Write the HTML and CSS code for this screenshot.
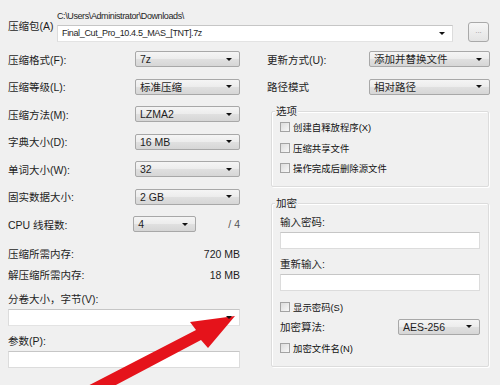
FILE: index.html
```html
<!DOCTYPE html>
<html lang="zh-CN">
<head>
    <meta charset="UTF-8">
    <title>添加到压缩包</title>
    <link rel="stylesheet" href="styles.css">
</head>
<body>
    <div class="dialog">
        <!-- Archive path -->
        <div class="archive">
            <div class="archive-label">压缩包(A)</div>
            <div class="archive-field">
                <div class="path">C:\Users\Administrator\Downloads\</div>
                <div class="combo edit"><span class="value latin">Final_Cut_Pro_10.4.5_MAS_[TNT].7z</span><span class="drop"></span></div>
            </div>
            <div class="browse">...</div>
        </div>

        <div class="columns">
            <!-- Left column -->
            <div class="left">
                <div class="row"><span class="label">压缩格式(F):</span><div class="combo"><span class="value">7z</span><span class="drop"></span></div></div>
                <div class="row"><span class="label">压缩等级(L):</span><div class="combo"><span class="value">标准压缩</span><span class="drop"></span></div></div>
                <div class="row"><span class="label">压缩方法(M):</span><div class="combo"><span class="value">LZMA2</span><span class="drop"></span></div></div>
                <div class="row"><span class="label">字典大小(D):</span><div class="combo"><span class="value">16 MB</span><span class="drop"></span></div></div>
                <div class="row"><span class="label">单词大小(W):</span><div class="combo"><span class="value">32</span><span class="drop"></span></div></div>
                <div class="row"><span class="label">固实数据大小:</span><div class="combo"><span class="value">2 GB</span><span class="drop"></span></div></div>
                <div class="row threads"><span class="label">CPU 线程数:</span><div class="combo short"><span class="value">4</span><span class="drop"></span></div><span class="total">/ 4</span></div>

                <div class="mem first"><span>压缩所需内存:</span><span>720 MB</span></div>
                <div class="mem"><span>解压缩所需内存:</span><span>18 MB</span></div>

                <div class="field-label volume">分卷大小，字节(V):</div>
                <div class="combo edit"><span class="value"></span><span class="drop"></span></div>
                <div class="field-label">参数(P):</div>
                <div class="textbox"></div>
            </div>

            <!-- Right column -->
            <div class="right">
                <div class="row"><span class="label">更新方式(U):</span><div class="combo wide"><span class="value">添加并替换文件</span><span class="drop"></span></div></div>
                <div class="row"><span class="label">路径模式</span><div class="combo wide"><span class="value">相对路径</span><span class="drop"></span></div></div>

                <div class="group options">
                    <div class="group-title">选项</div>
                    <div class="check"><span class="box"></span>创建自释放程序(X)</div>
                    <div class="check"><span class="box"></span>压缩共享文件</div>
                    <div class="check"><span class="box"></span>操作完成后删除源文件</div>
                </div>

                <div class="group encrypt">
                    <div class="group-title">加密</div>
                    <div class="field-label first">输入密码:</div>
                    <div class="textbox"></div>
                    <div class="field-label">重新输入:</div>
                    <div class="textbox"></div>
                    <div class="check show"><span class="box"></span>显示密码(S)</div>
                    <div class="row method"><span class="label">加密算法:</span><div class="combo aes"><span class="value">AES-256</span><span class="drop"></span></div></div>
                    <div class="check"><span class="box"></span>加密文件名(N)</div>
                </div>
            </div>
        </div>

        <!-- Red pointer drawn over the dialog -->
        <svg class="pointer" width="500" height="385" viewBox="0 0 500 385">
            <polygon points="235,316 208,348 201,340 80,404 74,393 196,330 190,322" fill="#e5131b"/>
        </svg>
    </div>
</body>
</html>
```

FILE: styles.css
```css
body {
    margin: 0;
    font-family: "Liberation Sans", "Noto Sans CJK SC", sans-serif;
    font-size: 10.5px;
    color: #1e1e1e;
}

.dialog {
    position: relative;
    width: 500px;
    height: 385px;
    box-sizing: border-box;
    padding: 9px 10px 0 8px;
    background: #f0f0f0;
    overflow: hidden;
}

/* top archive row */
.archive {
    display: flex;
    align-items: center;
}

.archive-label {
    width: 49px;
    line-height: 12px;
}

.archive-field {
    flex: 1;
}

.path {
    line-height: 12px;
    height: 12px;
    margin-bottom: 3px;
    font-size: 9px;
    letter-spacing: -0.4px;
}

.latin {
    font-size: 9px;
    letter-spacing: -0.35px;
}

.browse {
    width: 19px;
    height: 18px;
    margin: 13px 1px 0 15px;
    border: 1px solid #a9a9a9;
    border-radius: 3px;
    background: linear-gradient(#f6f6f6, #e4e4e4);
    color: #9a9a9a;
    font-size: 8px;
    line-height: 16px;
    text-align: center;
}

/* combos */
.combo {
    position: relative;
    display: flex;
    align-items: center;
    height: 16px;
    box-sizing: border-box;
    border: 1px solid #a8a8a8;
    border-radius: 2px;
    background: linear-gradient(#f5f5f5, #ececec 50%, #e0e0e0 51%, #d6d6d6);
    padding-left: 4px;
    width: 105px;
}

.combo.edit {
    height: 17px;
    width: auto;
    border-color: #c6c6c6 #dcdcdc #e3e3e3 #dcdcdc;
    border-radius: 0;
    background: #fff;
}

.combo.short {
    width: 63px;
}

.combo.wide {
    width: 121px;
}

.combo.aes {
    width: 82px;
}

.combo .value {
    flex: 1;
    white-space: nowrap;
    line-height: 14px;
}

.drop {
    position: relative;
    z-index: 1;
    width: 0;
    height: 0;
    margin-right: 7px;
    border-left: 3px solid transparent;
    border-right: 3px solid transparent;
    border-top: 3px solid #111;
}

.textbox {
    height: 17px;
    box-sizing: border-box;
    border: 1px solid #dcdcdc;
    border-top-color: #c6c6c6;
    background: #fff;
}

/* two columns */
.columns {
    display: grid;
    grid-template-columns: 232px 223px;
    column-gap: 27px;
    margin-top: 9px;
}

.row {
    display: flex;
    align-items: center;
    justify-content: space-between;
    height: 16px;
    margin-bottom: 11.5px;
}

.label {
    white-space: nowrap;
}

.total {
    color: #555;
}

.row.threads {
    justify-content: flex-start;
}

.row.threads .combo {
    margin-left: auto;
    margin-right: 32px;
}

.mem {
    display: flex;
    justify-content: space-between;
    line-height: 12px;
    margin-top: 9px;
}

.mem.first {
    margin-top: 16px;
}

.field-label {
    line-height: 12px;
    margin: 9px 0 4px;
}

.field-label.volume {
    margin-top: 11.5px;
}

/* group boxes */
.group {
    margin-left: 4px;
    width: 218px;
    box-sizing: border-box;
    border: 1px solid #dcdcdc;
    border-radius: 2px;
    box-shadow: inset 1px 1px 0 #fff, 1px 1px 0 #fff;
    padding: 0 8px;
}

.options {
    margin-top: 16.5px;
    padding-bottom: 7px;
}

.encrypt {
    margin-top: 16px;
    padding-bottom: 8px;
}

.group-title {
    width: fit-content;
    margin: -7px 0 0 -5px;
    padding: 0 1px;
    line-height: 12px;
    background: #f0f0f0;
}

.check {
    display: flex;
    align-items: center;
    height: 20.5px;
    white-space: nowrap;
    font-size: 9.4px;
    color: #111;
}

.options .check:first-of-type {
    margin-top: 5px;
}

.box {
    width: 10px;
    height: 10px;
    box-sizing: border-box;
    margin-right: 3px;
    border: 1px solid #a3a3a3;
    background: linear-gradient(135deg, #dcdcdc, #f8f8f8);
}

.encrypt .field-label.first {
    margin-top: 7px;
}

.encrypt .check {
    height: 20px;
}

.check.show {
    margin-top: 6px;
}

.row.method {
    margin: 2px 0 3px;
}

.pointer {
    position: absolute;
    left: 0;
    top: 0;
}
```
